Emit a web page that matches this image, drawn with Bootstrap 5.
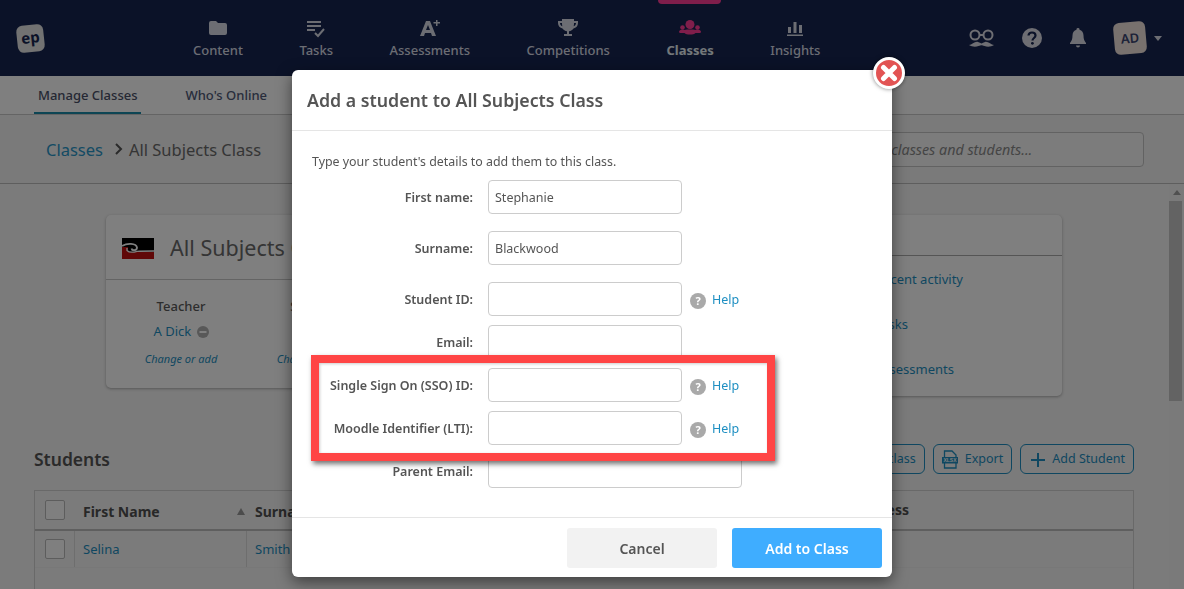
<!DOCTYPE html>
<html lang="en">
<head>
<meta charset="utf-8">
<title>Add a student</title>
<link href="https://cdn.jsdelivr.net/npm/bootstrap@5.3.0/dist/css/bootstrap.min.css" rel="stylesheet">
<style>
html,body{height:589px;overflow:hidden}
body{font-family:"Noto Sans","Open Sans",sans-serif;font-size:13px;background:#f6f6f6;color:#555}
a{text-decoration:none;color:#1e8fc2}
.topbar{height:76px;background:#162450;color:#d8dbe6}
.brand{margin:25px 0 0 17px;width:27px;height:27px;background:#e4e4e4;border-radius:6px;transform:rotate(-6deg);color:#162450;font-weight:700;font-size:15px;line-height:25px;text-align:center;flex:none}
.mainnav{margin-left:149px;gap:56.5px}
.navitem{height:76px;position:relative;text-align:center;font-size:13px;font-weight:500;color:#d8dbe6;padding-top:17px;white-space:nowrap}
.navitem svg{display:block;margin:0 auto;height:22px}
.navitem span{display:block;margin-top:0;line-height:22px}
.navitem.on{font-weight:700;color:#e6f0f4}
.navitem.on::before{content:"";position:absolute;left:-8px;right:-7px;top:0;height:4px;background:#ff3c96;border-radius:0 0 4px 4px}
.tools{margin-left:auto;padding-right:22px;height:76px}
.avatar{width:32px;height:32px;border-radius:6px;background:#f0e2dc;color:#3a4470;font-weight:600;font-size:13px;line-height:32px;text-align:center;transform:rotate(-5deg)}
.tri{width:0;height:0;border:4px solid transparent;border-top:5px solid #d8dbe6;border-bottom:0}
.subnav{height:39px;background:#fff;border-bottom:1px solid #c8c8c8;padding-left:34px;gap:40px;font-weight:500}
.subitem{height:38px;line-height:38px;padding:0 4px;color:#505a78}
.subitem.on{border-bottom:2px solid #1a8aa8;color:#4a5068}
.crumbs{height:69px;background:#f4f4f4;border-bottom:1px solid #bdbdbd;padding:0 40px 0 46px;font-size:16.5px;color:#6a6a6a}
.crumblink{color:#2896c8}
.crumbtext{position:relative;top:1px}
.crumbsep{margin:0 6px 0 12px}
.searchbox{margin-left:auto;width:309px;height:35px;border:1px solid #c4c4c4;border-radius:4px;font-style:italic;font-size:14.3px;padding:0 0 0 9px;color:#8a8a8a;line-height:33px;background:#f8f8f8}
.workarea{height:405px;overflow:hidden}
.content{width:1169px;flex:none;padding:31px 0 0 34px}
.scrollbar{width:15px;background:#f5f5f5;position:relative}
.scrollarrow{width:0;height:0;border:4px solid transparent;border-bottom:5px solid #a0a0a0;border-top:0;margin:6px auto 0}
.scrollthumb{width:13px;height:200px;background:#c6c6c6;margin-top:6px}
.cardrow{margin-left:72px;width:956px;height:182px;gap:24px;align-items:flex-start}
.panel{background:#fff;border-radius:5px;box-shadow:0 1px 3px rgba(0,0,0,.3)}
.panel-a{width:640px;height:173px}
.panel-b{flex:1;height:181px}
.panelhead-a{height:65px;border-bottom:1px solid #c8c8c8;padding:2px 0 0 16px;font-size:21.5px;color:#6a6a6a;gap:16px}
.panelhead-b{height:41px;border-bottom:1px solid #aaa}
.peoplecol{width:150px;text-align:center;padding-top:17px}
.peoplecol.narrow{width:114px}
.ptitle{font-weight:500;color:#5a5a5a}
.plink{margin-top:5px;color:#1e8fc2;line-height:18px}
.pchange{margin-top:10px;font-style:italic;font-size:11px;color:#1e8fc2;line-height:17px}
.minus{display:inline-block;vertical-align:-2px;margin-left:2px}
.quicklist{padding:14px 0 0 105px;color:#1e8fc2}
.quicklist div{height:45px;line-height:18px}
.studenthead{margin-top:47px;width:1100px;height:30px}
.studenthead h2{font-size:17.5px;font-weight:600;color:#555;margin:0}
.tools2{margin-left:auto;gap:8px}
.outbtn{height:30px;border:1px solid #1e8fc2;border-radius:6px;color:#1e8fc2;font-size:12.5px;padding:1px 8px 0 8px;gap:7px;background:transparent}
.outbtn:last-child{padding-left:10px}
.grid{width:1100px;margin-top:16px;border:1px solid #d2d2d2;border-bottom:0;height:99px}
.gridhead{height:40px;border-bottom:2px solid #bebebe;font-weight:700;font-size:14px;color:#505050;position:relative}
.gridrow{height:37px;color:#1e8fc2;border-bottom:1px solid #f0f0f0}
.tick{width:20px;height:20px;border:1px solid #bbb;border-radius:2px;background:#fff;margin:0 9px 0 10px;flex:none}
.c1{width:40px;flex:none;height:100%;display:flex;align-items:center}
.c2{width:172px;flex:none;padding:2px 2px 0 8px;height:100%;display:flex;align-items:center;justify-content:space-between}
.c3{width:200px;flex:none;padding:2px 0 0 8px;height:100%;display:flex;align-items:center}
.gridrow .c1,.gridrow .c2{border-right:1px solid #dcdcdc}
.sortup{width:0;height:0;border:4.5px solid transparent;border-bottom:7px solid #999;border-top:0}
.lastcol{margin-left:auto;margin-right:224px;line-height:42px}
.sheet{position:absolute;left:292px;top:70px;width:600px;height:507px;z-index:1060;background:#fff;border:0;border-radius:6px;box-shadow:0 5px 15px rgba(0,0,0,.5);color:#555;display:flex;flex-direction:column}
.sheet .modal-header{height:61px;padding:1px 15px 0;border-bottom:1px solid #e5e5e5;flex:none}
.sheet .modal-title{font-size:17.75px;font-weight:600;color:#555}
.sheet .modal-body{padding:21px 20px 0;flex:1}
.intro{line-height:20px;margin-bottom:8px;font-size:12.4px}
.frow{height:34px;margin-bottom:9px}
.frow.wide{margin-bottom:17px}
.flabel{width:161px;text-align:right;font-weight:600;font-size:12.5px;color:#555;flex:none;margin:2px 15px 0 0;white-space:nowrap}
.finput{width:194px;height:34px;padding:0 6px;border:1px solid #ccc;border-radius:4px;font-size:12.5px;color:#555;box-shadow:none;flex:none}
.finput.long{width:254px}
.helpq{width:16px;height:16px;border-radius:50%;background:#a9a9a9;color:#fff;font-size:11px;font-weight:700;line-height:16px;text-align:center;margin:3px 6px 0 8px;flex:none}
.helplink{font-size:12.5px;margin-top:3px}
.sheet .modal-footer{height:60px;padding:10px 10px 0 0;border-top:1px solid #e5e5e5;gap:15px;flex:none;justify-content:flex-end;align-items:flex-start}
.sheet .modal-footer .btn{margin:0;width:150px;height:40px;border:0;border-radius:3px;font-size:14px;font-weight:600}
.sheet .modal-footer .btn-cancel{background:#f2f2f2;color:#555}
.sheet .modal-footer .btn-go{background:#3fadff;color:#fff}
.closer{position:absolute;left:581px;top:-13px;width:32px;height:32px;border-radius:50%;background:#e25353;border:3px solid #fff;box-shadow:0 0 4px rgba(0,0,0,.5);padding:0;display:flex;align-items:center;justify-content:center}
.callout{position:absolute;left:19px;top:285px;width:464px;height:106px;border:8px solid #ff4545;box-shadow:2px 3px 5px rgba(0,0,0,.55),inset 1px 1px 3px rgba(0,0,0,.2);pointer-events:none}
</style>
</head>
<body>
<header class="topbar d-flex align-items-start">
  <div class="brand">ep</div>
  <nav class="mainnav d-flex">
    <a class="navitem"><svg width="18" height="22" viewBox="0 0 18 22" fill="currentColor"><path d="M0 6a2 2 0 0 1 2-2h5l2 2h7a2 2 0 0 1 2 2v8a2 2 0 0 1-2 2H2a2 2 0 0 1-2-2z"/></svg><span>Content</span></a>
    <a class="navitem"><svg width="20" height="22" viewBox="0 0 20 22" fill="none" stroke="currentColor" stroke-width="2"><path d="M1 5h14M1 9h14M1 13h8M9 16l3 3 6-7"/></svg><span>Tasks</span></a>
    <a class="navitem"><svg width="22" height="22" viewBox="0 0 22 22" fill="currentColor"><path d="M1 19 7 4h4l6 15h-4l-1-3H6l-1 3zM7 13h4L9 8z"/><path d="M17 3h1.500v2H21v1.500h-2.500V9H17V6.500h-2.500V5H17z"/></svg><span>Assessments</span></a>
    <a class="navitem"><svg width="20" height="22" viewBox="0 0 20 22" fill="currentColor"><path d="M4 2h12v2h4v2c0 3-2 5-4.500 5.500C14.500 13 13 14 11 14.300V17h3v2H6v-2h3v-2.700C7 14 5.500 13 4.500 11.500 2 11 0 9 0 6V4h4zM2 6c0 1.500.8 2.800 2.300 3.300C4 8 4 7 4 6zm16 0h-2c0 1 0 2-.3 3.300C17.200 8.800 18 7.500 18 6z"/></svg><span>Competitions</span></a>
    <a class="navitem on"><svg width="22" height="22" viewBox="0 0 22 22" fill="#ff3c96"><circle cx="11" cy="7.500" r="4.500"/><circle cx="3.500" cy="10.500" r="2.300"/><circle cx="18.500" cy="10.500" r="2.300"/><path d="M0 15c0-1.500 1.500-2.500 3.500-2.500 1 0 1.500.2 2 .5C7 12.500 9 12.500 11 12.500s4 0 5.500.5c.5-.3 1-.5 2-.5 2 0 3.500 1 3.500 2.500 0 .8-1 1-2 1h-3.500c-1 1-3 1.500-5.500 1.500s-4.500-.5-5.500-1.500H2c-1 0-2-.2-2-1z"/></svg><span>Classes</span></a>
    <a class="navitem"><svg width="16" height="22" viewBox="0 0 16 22" fill="currentColor"><path d="M1 10h3v6H1zM6.500 5h3v11h-3zM12 8h3v8h-3zM0 17.500h16V19H0z"/></svg><span>Insights</span></a>
  </nav>
  <div class="tools d-flex align-items-center">
    <svg class="me-4" width="25" height="18" viewBox="0 0 25 18" fill="none" stroke="#dcdce6" stroke-width="2"><circle cx="6" cy="6" r="4.500"/><circle cx="19" cy="6" r="4.500"/><path d="M10.500 6h4"/><path fill="#dcdce6" stroke="none" d="M0 16c3 0 6-4 9-3 1.500.4 2.500 1 3.500 1.500 1-.5 2-1.100 3.500-1.500 3-1 6 3 9 3-3 2-7 2-9.500 1-1.500-.6-2.300-.8-3-.8s-1.500.2-3 .8C7 18 3 18 0 16z"/></svg>
    <svg class="me-4 ms-1" width="20" height="20" viewBox="0 0 20 20"><circle cx="10" cy="10" r="10" fill="#dcdce6"/><path d="M6.500 7.500C6.700 5.500 8 4.500 10 4.500s3.500 1.200 3.500 3c0 2.500-3 2.500-3 5" fill="none" stroke="#162450" stroke-width="2.200"/><circle cx="10.400" cy="15.300" r="1.400" fill="#162450"/></svg>
    <svg class="me-4 ms-1" width="16" height="20" viewBox="0 0 16 20" fill="#dcdce6"><path d="M8 0a1.500 1.500 0 0 1 1.500 1.700C12 2.400 13.500 4.600 13.500 7.500c0 4 1 5.500 2.500 7.500v1H0v-1c1.500-2 2.500-3.500 2.500-7.500 0-2.900 1.500-5.100 4-5.800A1.500 1.500 0 0 1 8 0zM6 17.500h4a2 2 0 0 1-4 0z"/></svg>
    <div class="avatar ms-1">AD</div>
    <div class="tri ms-2"></div>
  </div>
</header>
<div class="subnav d-flex">
  <a class="subitem on">Manage Classes</a>
  <a class="subitem">Who's Online</a>
</div>
<div class="crumbs d-flex align-items-center">
  <a class="crumblink crumbtext">Classes</a>
  <svg class="crumbsep" width="8" height="12" viewBox="0 0 8 12" fill="none" stroke="#555" stroke-width="2"><path d="M1 1l5 5-5 5"/></svg>
  <span class="crumbtext">All Subjects Class</span>
  <div class="searchbox">Search classes and students...</div>
</div>
<div class="workarea d-flex">
  <main class="content">
    <div class="cardrow d-flex">
      <section class="panel panel-a">
        <div class="panelhead-a d-flex align-items-center">
          <svg width="32" height="21" viewBox="0 0 32 21"><rect width="32" height="21" fill="#000"/><path d="M0 9h6v5h26v7H0z" fill="#c01010"/><path d="M0 8C5 5 14 5 15 9.500 15 13 10 13 9.500 10.500" fill="none" stroke="#fff" stroke-width="1.800"/><path d="M5 10v2.500c2 2 6 2 10 .8 4-.3 11-.3 17-.3" fill="none" stroke="#fff" stroke-width="1.300"/></svg>
          <span>All Subjects Class</span>
        </div>
        <div class="d-flex">
          <div class="peoplecol">
            <div class="ptitle">Teacher</div>
            <div class="plink">A Dick <svg class="minus" width="12" height="12" viewBox="0 0 12 12"><circle cx="6" cy="6" r="6" fill="#b0b0b0"/><rect x="2.500" y="5" width="7" height="2" fill="#fff"/></svg></div>
            <div class="pchange">Change or add</div>
          </div>
          <div class="peoplecol narrow">
            <div class="ptitle">Subject</div>
            <div class="plink">Maths</div>
            <div class="pchange">Change or add</div>
          </div>
        </div>
      </section>
      <section class="panel panel-b">
        <div class="panelhead-b"></div>
        <div class="quicklist">
          <div>Recent activity</div>
          <div>Tasks</div>
          <div>Assessments</div>
        </div>
      </section>
    </div>
    <div class="studenthead d-flex align-items-center">
      <h2>Students</h2>
      <div class="tools2 d-flex">
        <a class="outbtn d-flex align-items-center">Move to class</a>
        <a class="outbtn d-flex align-items-center">
          <svg width="16" height="19" viewBox="0 0 16 19"><path d="M2.500 1h7.500l4 4v13H2.500z" fill="none" stroke="#1e8fc2" stroke-width="1.300"/><rect x="0" y="7" width="16" height="6.500" fill="#1e8fc2"/><text x="8" y="12.300" text-anchor="middle" font-size="5" font-weight="700" fill="#fff" font-family="Liberation Sans">XLSX</text></svg>
          Export</a>
        <a class="outbtn d-flex align-items-center"><svg width="14" height="14" viewBox="0 0 14 14" stroke="#1e8fc2" stroke-width="2"><path d="M7 0v14M0 7h14"/></svg>Add Student</a>
      </div>
    </div>
    <div class="grid">
      <div class="gridhead d-flex align-items-center">
        <div class="c1"><div class="tick"></div></div>
        <div class="c2"><span>First Name</span><span class="sortup"></span></div>
        <div class="c3">Surname</div>
        <div class="lastcol">Last Access</div>
      </div>
      <div class="gridrow d-flex align-items-center">
        <div class="c1"><div class="tick"></div></div>
        <div class="c2">Selina</div>
        <div class="c3">Smith</div>
      </div>
    </div>
  </main>
  <div class="scrollbar"><div class="scrollarrow"></div><div class="scrollthumb"></div></div>
</div>

<div class="modal-backdrop show"></div>
<div class="modal-content sheet">
  <div class="modal-header"><h5 class="modal-title">Add a student to All Subjects Class</h5></div>
  <div class="modal-body">
    <p class="intro">Type your student's details to add them to this class.</p>
    <div class="frow wide d-flex align-items-center"><label class="flabel">First name:</label><input class="form-control finput" value="Stephanie"></div>
    <div class="frow wide d-flex align-items-center"><label class="flabel">Surname:</label><input class="form-control finput" value="Blackwood"></div>
    <div class="frow d-flex align-items-center"><label class="flabel">Student ID:</label><input class="form-control finput"><span class="helpq">?</span><a class="helplink">Help</a></div>
    <div class="frow d-flex align-items-center"><label class="flabel">Email:</label><input class="form-control finput"></div>
    <div class="frow d-flex align-items-center"><label class="flabel">Single Sign On (SSO) ID:</label><input class="form-control finput"><span class="helpq">?</span><a class="helplink">Help</a></div>
    <div class="frow d-flex align-items-center"><label class="flabel">Moodle Identifier (LTI):</label><input class="form-control finput"><span class="helpq">?</span><a class="helplink">Help</a></div>
    <div class="frow d-flex align-items-center"><label class="flabel">Parent Email:</label><input class="form-control finput long"></div>
  </div>
  <div class="modal-footer">
    <button class="btn btn-cancel" type="button">Cancel</button>
    <button class="btn btn-go" type="button">Add to Class</button>
  </div>
  <button class="closer" type="button" aria-label="Close"><svg width="18" height="18" viewBox="0 0 18 18" fill="none" stroke="#fff" stroke-width="5" stroke-linecap="round"><path d="M3.500 3.500l11 11M14.500 3.500l-11 11"/></svg></button>
  <div class="callout"></div>
</div>
</body>
</html>
